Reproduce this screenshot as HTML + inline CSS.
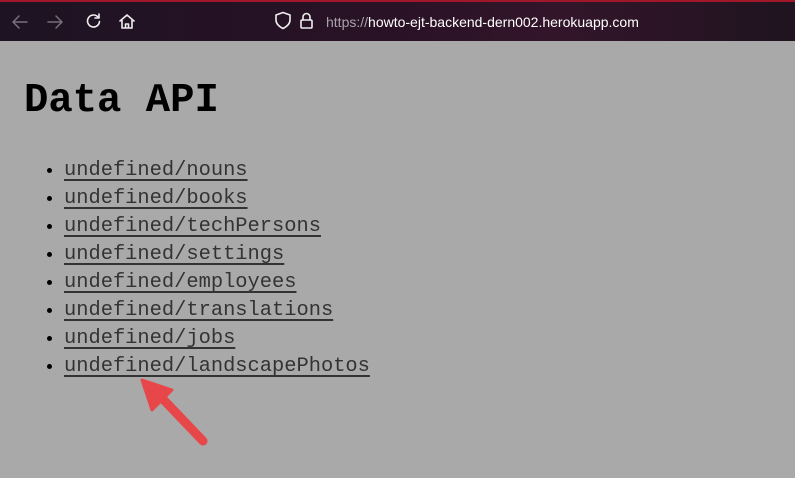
<!DOCTYPE html>
<html><head><style>
body{margin:0;width:795px;height:478px;background:#a9a9a9;overflow:hidden;position:relative}
.bar{position:absolute;left:0;top:0;width:795px;height:41px;background:linear-gradient(90deg,#1d1322,#2a1226 50%,#33152a 70%,#1f1420);border-top:2px solid #a0172a;box-sizing:border-box}
.url{position:absolute;left:326px;top:12px;font:14px "Liberation Sans",sans-serif;color:#fff}
.url span{color:#a8a3ab}
h1{position:absolute;left:24px;top:78px;margin:0;font:bold 40.6px "Liberation Mono",monospace;color:#000}
ul{position:absolute;left:24px;top:157px;margin:0;padding:0 0 0 40px;font:20.4px/28px "Liberation Mono",monospace}
li{color:#000;height:28px}
a{color:#333;text-decoration:underline;text-decoration-thickness:2px;text-underline-offset:4px}
</style></head><body>
<div class="bar">
<svg width="795" height="39" style="position:absolute;left:0;top:0" fill="none" stroke-linecap="round" stroke-linejoin="round">
<g stroke="#77707a" stroke-width="1.5"><path d="M13 20h14M13 20l6-6M13 20l6 6"/><path d="M48 20h14M62 20l-6-6M62 20l-6 6"/></g>
<g stroke="#eee" stroke-width="1.6"><path d="M98 15a6 6 0 1 0 1.5 4.5"/><path d="M99 12v4h-4"/>
<path d="M120 19l7-6 7 6M122 18v8h10v-8M125.5 26v-4h3v4"/>
<path d="M276 13l7-2.5 7 2.5v5c0 4-3 6.5-7 8.5-4-2-7-4.5-7-8.5z"/>
<rect x="301" y="18" width="11" height="8" rx="1"/><path d="M303 18v-3a3.5 3.5 0 0 1 7 0v3"/></g>
</svg>
<div class="url"><span>https://</span>howto-ejt-backend-dern002.herokuapp.com</div>
</div>
<h1>Data API</h1>
<ul>
<li><a>undefined/nouns</a></li>
<li><a>undefined/books</a></li>
<li><a>undefined/techPersons</a></li>
<li><a>undefined/settings</a></li>
<li><a>undefined/employees</a></li>
<li><a>undefined/translations</a></li>
<li><a>undefined/jobs</a></li>
<li><a>undefined/landscapePhotos</a></li>
</ul>
<svg width="795" height="478" style="position:absolute;left:0;top:0">
<path d="M203 441L160 396" stroke="#e8474a" stroke-width="9" stroke-linecap="round"/>
<path d="M142 380L172 390L152 410Z" fill="#e8474a" stroke="#e8474a" stroke-width="3" stroke-linejoin="round"/>
</svg>
</body></html>
